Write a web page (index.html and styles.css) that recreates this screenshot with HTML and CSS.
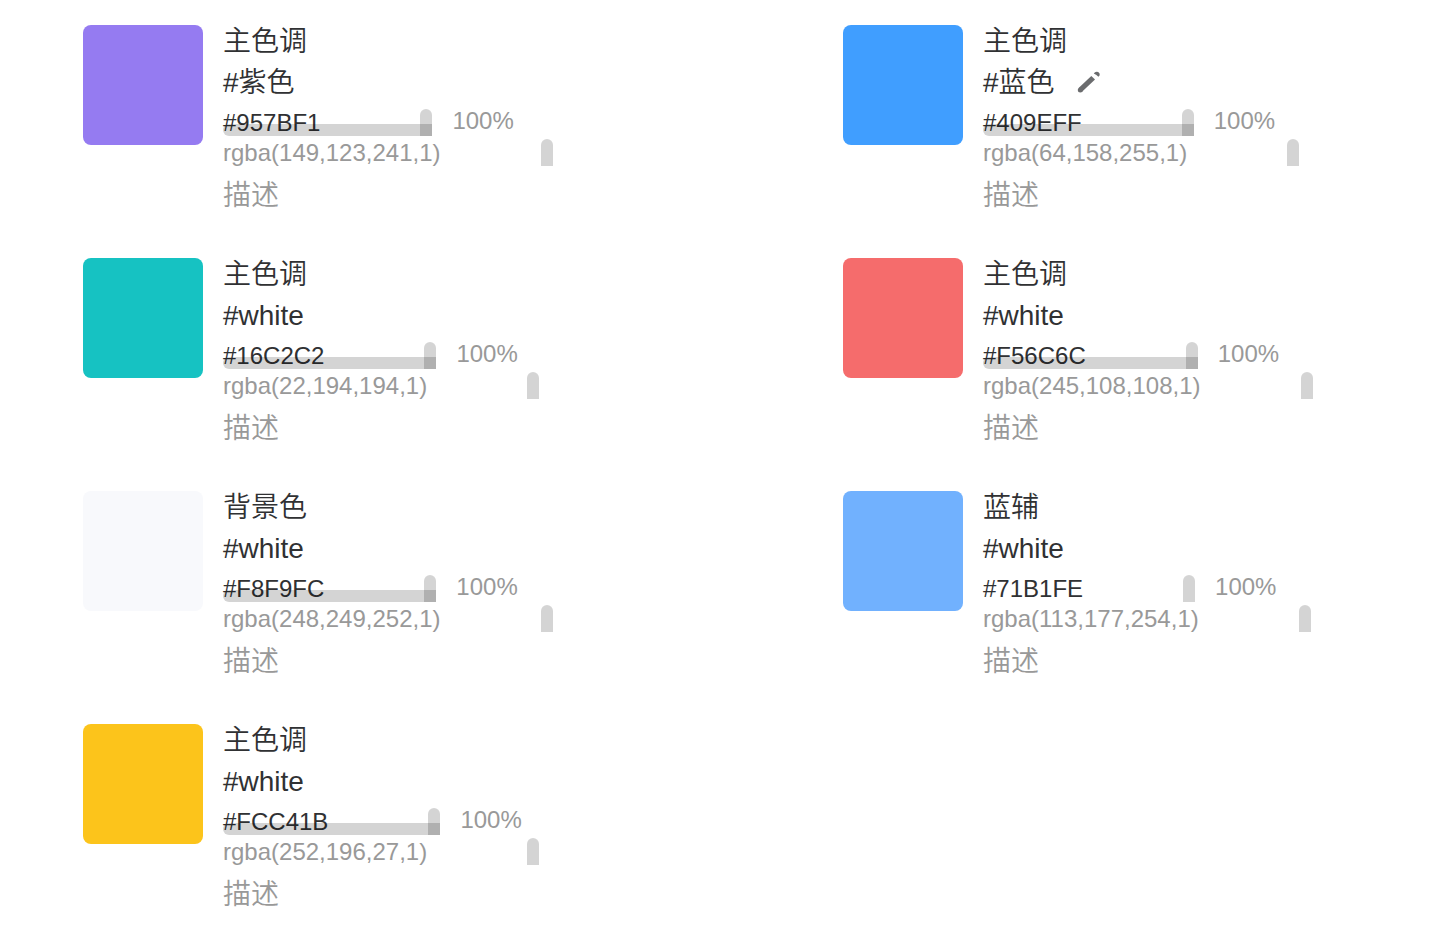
FILE: index.html
```html
<!DOCTYPE html>
<html lang="zh-CN">
<head>
<meta charset="utf-8">
<title>主色调</title>
<link rel="stylesheet" href="styles.css">
</head>
<body>
<main class="palette">
  <article class="color">
    <div class="swatch swatch-purple"></div>
    <div class="info">
      <h2 class="title">主色调</h2>
      <div class="name">#紫色</div>
      <div class="values"><span class="code scroll-x scroll-y">#957BF1</span><span class="alpha">100%</span></div>
      <div class="rgba scroll-y">rgba(149,123,241,1)</div>
      <p class="desc">描述</p>
    </div>
  </article>
  <article class="color">
    <div class="swatch swatch-blue"></div>
    <div class="info">
      <h2 class="title">主色调</h2>
      <div class="name">#蓝色
        <button class="edit" type="button" aria-label="编辑">
          <svg class="edit-icon" viewBox="0 0 24 24" aria-hidden="true">
            <circle cx="3.300" cy="18.900" r="2.500"/>
            <path d="M1.600 17.100 L14.300 5.100 L18 8.500 L5 20.700Z"/>
            <path d="M16.800 2.600 L18 1.300 Q19.300 0.200 21.200 1 Q23.200 2.200 22.700 4.300 L21.400 5.800 Q19.700 4.200 16.800 2.600Z"/>
          </svg>
        </button>
      </div>
      <div class="values"><span class="code scroll-x scroll-y">#409EFF</span><span class="alpha">100%</span></div>
      <div class="rgba scroll-y">rgba(64,158,255,1)</div>
      <p class="desc">描述</p>
    </div>
  </article>
  <article class="color">
    <div class="swatch swatch-teal"></div>
    <div class="info">
      <h2 class="title">主色调</h2>
      <div class="name">#white</div>
      <div class="values"><span class="code scroll-x scroll-y">#16C2C2</span><span class="alpha">100%</span></div>
      <div class="rgba scroll-y">rgba(22,194,194,1)</div>
      <p class="desc">描述</p>
    </div>
  </article>
  <article class="color">
    <div class="swatch swatch-red"></div>
    <div class="info">
      <h2 class="title">主色调</h2>
      <div class="name">#white</div>
      <div class="values"><span class="code scroll-x scroll-y">#F56C6C</span><span class="alpha">100%</span></div>
      <div class="rgba scroll-y">rgba(245,108,108,1)</div>
      <p class="desc">描述</p>
    </div>
  </article>
  <article class="color">
    <div class="swatch swatch-background"></div>
    <div class="info">
      <h2 class="title">背景色</h2>
      <div class="name">#white</div>
      <div class="values"><span class="code scroll-x scroll-y">#F8F9FC</span><span class="alpha">100%</span></div>
      <div class="rgba scroll-y">rgba(248,249,252,1)</div>
      <p class="desc">描述</p>
    </div>
  </article>
  <article class="color">
    <div class="swatch swatch-light-blue"></div>
    <div class="info">
      <h2 class="title">蓝辅</h2>
      <div class="name">#white</div>
      <div class="values"><span class="code scroll-y">#71B1FE</span><span class="alpha">100%</span></div>
      <div class="rgba scroll-y">rgba(113,177,254,1)</div>
      <p class="desc">描述</p>
    </div>
  </article>
  <article class="color">
    <div class="swatch swatch-yellow"></div>
    <div class="info">
      <h2 class="title">主色调</h2>
      <div class="name">#white</div>
      <div class="values"><span class="code scroll-x scroll-y">#FCC41B</span><span class="alpha">100%</span></div>
      <div class="rgba scroll-y">rgba(252,196,27,1)</div>
      <p class="desc">描述</p>
    </div>
  </article>
</main>
</body>
</html>
```
FILE: styles.css
```css
body {
  margin: 0;
  background: #fff;
  color: #303133;
  font-family: "Liberation Sans", "Noto Sans CJK SC", sans-serif;
  font-size: 24px;
  font-weight: 350;
  line-height: 27px;
}

.palette {
  display: grid;
  grid-template-columns: 1fr 1fr;
  column-gap: 168px;
  row-gap: 38px;
  padding: 21px 0 0 83px;
}

.color {
  display: flex;
  gap: 20px;
}

.swatch {
  flex: none;
  width: 120px;
  height: 120px;
  margin-top: 4px;
  border-radius: 8px;
}

.swatch-purple { background: #957bf1; }
.swatch-blue { background: #409eff; }
.swatch-teal { background: #16c2c2; }
.swatch-red { background: #f56c6c; }
.swatch-background { background: #f8f9fc; }
.swatch-light-blue { background: #71b1fe; }
.swatch-yellow { background: #fcc41b; }

.info {
  display: flex;
  flex-direction: column;
  align-items: flex-start;
}

.title,
.name,
.desc {
  height: 41px;
  margin: 0;
  font-size: 28px;
  font-weight: 350;
  line-height: 41px;
}

.name {
  display: flex;
  align-items: center;
  gap: 22px;
}

.edit {
  display: flex;
  padding: 0;
  border: 0;
  background: none;
  cursor: pointer;
}

.edit-icon {
  width: 24px;
  height: 24px;
  fill: #6b6c6e;
}

.values {
  display: flex;
  align-items: flex-start;
  gap: 20px;
  margin-top: 4px;
}

.code {
  margin-top: 2px;
}

.rgba {
  margin-top: 3px;
  color: #999;
}

.alpha,
.desc {
  color: #999;
}

.desc {
  margin-top: 9px;
}

.scroll-x,
.scroll-y {
  position: relative;
  padding-right: 112px;
  white-space: nowrap;
}

.scroll-x::before,
.scroll-y::after {
  content: "";
  position: absolute;
  right: 0;
  bottom: 0;
  background: rgba(0, 0, 0, 0.17);
}

.scroll-x::before {
  left: 0;
  height: 12px;
  border-radius: 6px 0 0 6px;
}

.scroll-y::after {
  top: 0;
  width: 12px;
  border-radius: 6px 6px 0 0;
}
```
